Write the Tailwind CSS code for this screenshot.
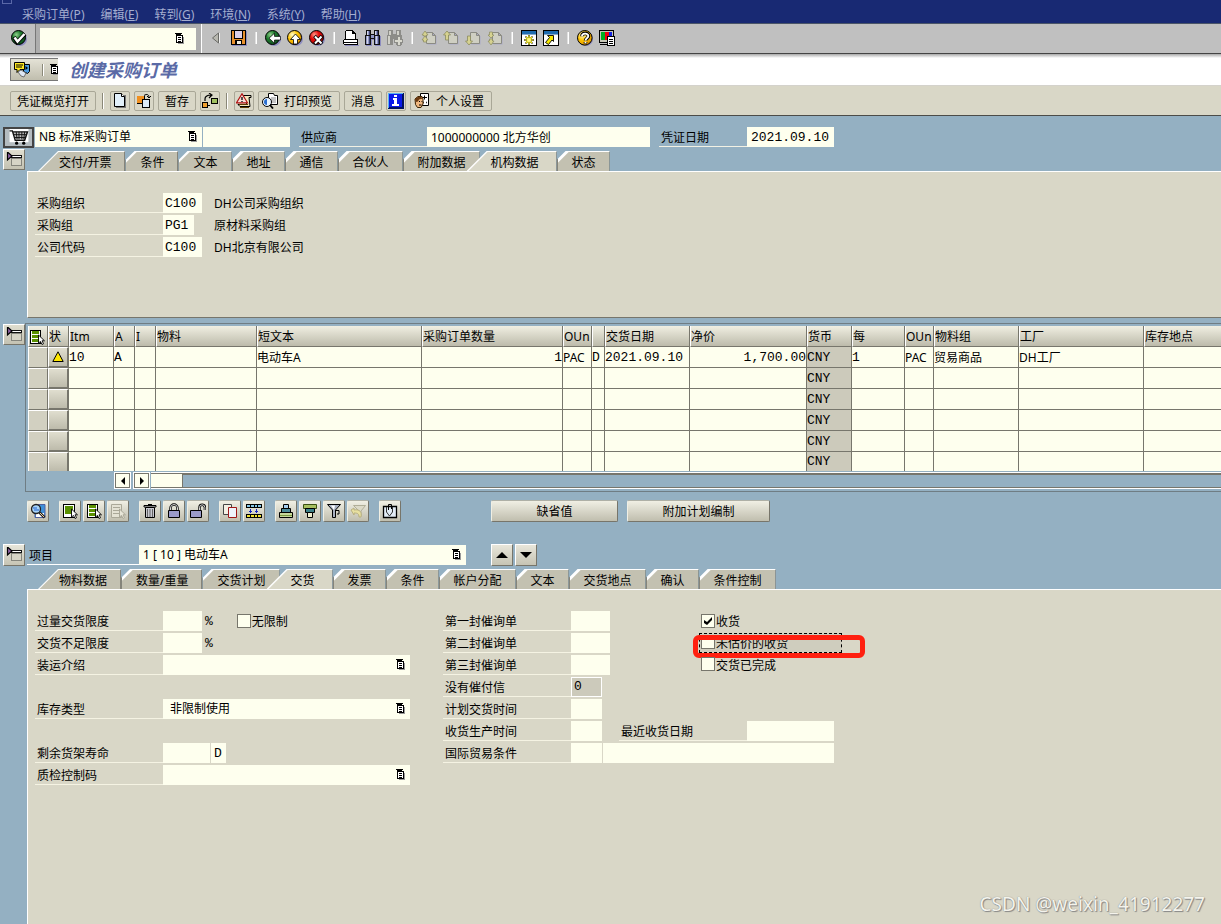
<!DOCTYPE html>
<html lang="zh-CN">
<head>
<meta charset="utf-8">
<meta name="viewport" content="width=device-width, initial-scale=1">
<title>创建采购订单</title>
<script src="https://cdn.jsdelivr.net/npm/@tailwindcss/browser@4"></script>
</head>
<body class="flex min-h-screen flex-col overflow-x-hidden bg-[#94b0c2] font-['Noto_Sans','Noto_Sans_CJK_SC',sans-serif] text-xs leading-5 text-black">

<svg class="absolute h-0 w-0" aria-hidden="true" xmlns="http://www.w3.org/2000/svg">
  <defs>
    <radialGradient id="gGreen" cx=".35" cy=".3" r=".8"><stop offset="0" stop-color="#8fd08a"/><stop offset=".4" stop-color="#1f7a2e"/><stop offset="1" stop-color="#0c4a1c"/></radialGradient>
    <radialGradient id="gRed" cx=".35" cy=".3" r=".8"><stop offset="0" stop-color="#ff9a8a"/><stop offset=".4" stop-color="#e40c0c"/><stop offset="1" stop-color="#a00000"/></radialGradient>
    <radialGradient id="gYel" cx=".35" cy=".3" r=".8"><stop offset="0" stop-color="#fffbd0"/><stop offset=".45" stop-color="#ffc400"/><stop offset="1" stop-color="#d88a00"/></radialGradient>
  </defs>
  <symbol id="ok" viewBox="0 0 16 16"><circle cx="9" cy="9" r="7" fill="#8d8dc0"/><circle cx="7.500" cy="7.500" r="7" fill="url(#gGreen)" stroke="#000"/><path d="M3 7l3 5 8-8" fill="none" stroke="#000" stroke-width="4"/><path d="M3.500 7.500l3 4 7-7.500" fill="none" stroke="#fff" stroke-width="2.500"/></symbol>
  <symbol id="back" viewBox="0 0 16 16"><circle cx="9" cy="9" r="7" fill="#8d8dc0"/><circle cx="7.500" cy="7.500" r="7" fill="url(#gGreen)" stroke="#000"/><path d="M4 8.200l5.500-5v3.200h6v3.600h-6v3.200z" fill="#fff" stroke="#000" stroke-width=".7"/></symbol>
  <symbol id="up" viewBox="0 0 16 16"><circle cx="9" cy="9" r="7" fill="#8d8dc0"/><circle cx="7.500" cy="7.500" r="7" fill="url(#gYel)" stroke="#000"/><path d="M8.500 4l5 5.500h-3v4.500h-4V9.500h-3z" fill="#fff" stroke="#000" stroke-width=".8"/></symbol>
  <symbol id="cancel" viewBox="0 0 16 16"><circle cx="9" cy="9" r="7" fill="#8d8dc0"/><circle cx="7.500" cy="7.500" r="7" fill="url(#gRed)" stroke="#000"/><path d="M5.500 6l7.500 8M13 6l-7.500 8" stroke="#000" stroke-width="3.500"/><path d="M6 6.500l6.500 7M12.500 6.500l-6.500 7" stroke="#fff" stroke-width="2"/></symbol>
  <symbol id="list" viewBox="0 0 10 12"><g shape-rendering="crispEdges"><path d="M3 4h6v7H3z" fill="#999"/><path d="M1 2h7v8H1z" fill="#000"/><path d="M2 3h5v6H2z" fill="#fff"/><path d="M0 0h7v1H0zM1 1h5v1H1zM2 2h3v1H2zM3 4h3v1H3zM3 6h3v1H3zM3 8h3v1H3z" fill="#000"/></g></symbol>
  <symbol id="save" viewBox="0 0 16 16"><g shape-rendering="crispEdges"><path d="M1 1h15v15H1z" fill="#8d8dc0"/><path d="M0 0h15v15H0z" fill="#000"/><path d="M1 1h13v13H1z" fill="#e8902c"/><path d="M3 1h9v8H3z" fill="#000"/><path d="M4 1h7v7H4z" fill="#dcd0e8"/><path d="M4 10h7v4H4z" fill="#000"/><path d="M6 11h4v3H6z" fill="#f4eee0"/></g></symbol>
  <symbol id="print" viewBox="0 0 16 16"><g shape-rendering="crispEdges"><path d="M3 1h7l3 3v6H3z" fill="#fff"/><path d="M3 0h7v1H3zM2 1h1v9H2zM10 1h1v1h1v1h1v7h-1V4H9V1z" fill="#000"/><path d="M1 9h13v5H1z" fill="#fff"/><path d="M1 9h14v1H1zM0 10h1v4H0zM1 12h13v1H1zM1 14h14v1H1zM14 10h1v4h-1z" fill="#000"/><path d="M2 15h14v1H2z" fill="#8d8dc0"/></g></symbol>
  <symbol id="find" viewBox="0 0 16 16"><g shape-rendering="crispEdges"><path d="M2 1h4v4h4V1h4v5h2v10h-6V10H7v6H1V6h1z" fill="#8d8dc0"/><path d="M1 0h5v4h3V0h5v5h1v10H9V9H6v6H0V5h1z" fill="#111"/><path d="M2 1h3v4H2zM10 1h3v4h-3zM1 6h4v8H1zM10 6h4v8h-4zM6 5h3v3H6z" fill="#8f96c4"/><path d="M2 1h1v4H2zM10 1h1v4h-1zM2 6h1v8H2zM11 6h1v8h-1z" fill="#d0d4ec"/><path d="M4 6h1v8H4zM13 6h1v8h-1zM4 1h1v4H4zM12 1h1v4h-1z" fill="#3c4270"/></g></symbol>
  <symbol id="findn" viewBox="0 0 16 16"><g shape-rendering="crispEdges"><path d="M1 0h5v4h3V0h5v5h1v10H9V9H6v6H0V5h1z" fill="#8c8c88"/><path d="M2 1h2v4H2zM10 1h2v4h-2zM1 6h2v8H1z" fill="#d0d0c8"/><path d="M10.500 6.500h3v3h2v3h-2v3h-3v-3h-3v-3h3z" fill="#d8d8ce" stroke="#8c8c88"/></g></symbol>
  <symbol id="pg" viewBox="0 0 16 16"><path d="M5.500 2.500h6l3 3v8h-9z" fill="#a9a9c8" transform="translate(1 1)"/><path d="M5.500 2.500h6l3 3v8h-9zM11.500 2.500v3h3" fill="#cfcfc2" stroke="#8b8b83"/></symbol>
  <symbol id="pgFirst" viewBox="0 0 16 16"><use href="#pg"/><path d="M4 1l3 4H5.500v1h-3V5H1zM4 6l3 4H5.500v2h-3v-2H1z" fill="#d6d290" stroke="#8b8b60" stroke-width=".7"/></symbol>
  <symbol id="pgUp" viewBox="0 0 16 16"><use href="#pg"/><path d="M4 1l3.500 4H5.500v5h-3V5H.5z" fill="#d6d290" stroke="#8b8b60" stroke-width=".8"/></symbol>
  <symbol id="pgDown" viewBox="0 0 16 16"><use href="#pg"/><path d="M4 15l3.500-4H5.500V6h-3v5H.5z" fill="#d6d290" stroke="#8b8b60" stroke-width=".8"/></symbol>
  <symbol id="pgLast" viewBox="0 0 16 16"><use href="#pg"/><path d="M4 8l3-3H5.500V2h-3v3H1zM4 15l3-4H5.500V9h-3v2H1z" fill="#d6d290" stroke="#8b8b60" stroke-width=".7"/></symbol>
  <symbol id="win" viewBox="0 0 16 16"><g shape-rendering="crispEdges"><path d="M0 0h16v16H0z" fill="#000"/><path d="M1 1h14v14H1z" fill="#fff"/><path d="M1 1h14v3H1z" fill="#1f6cb0"/><path d="M1 4h14v1H1z" fill="#8ac"/></g></symbol>
  <symbol id="winNew" viewBox="0 0 16 16"><use href="#win"/><path d="M8 5v10M3 10h10M4.500 6.500l7 7M11.500 6.500l-7 7" stroke="#222" stroke-width="1.500"/><path d="M8 5.500v9M3.500 10h9M5 7l6 6M11 7l-6 6" stroke="#f5e800" stroke-width="1.200"/><circle cx="8" cy="10" r="2" fill="#fff880"/></symbol>
  <symbol id="winLink" viewBox="0 0 16 16"><use href="#win"/><path d="M4.500 5.500h6v6L9 10 5.500 14.500l-3-2L6.500 7.500z" fill="#f5e800" stroke="#000" stroke-width=".9"/></symbol>
  <symbol id="help" viewBox="0 0 16 16"><circle cx="9" cy="9" r="7" fill="#8d8dc0"/><circle cx="7.800" cy="7.800" r="7.300" fill="url(#gYel)" stroke="#000"/><path d="M5 6.200C5 2.500 11.500 2.500 11.500 6c0 2.500-3 2.300-3 4.500M8.500 12v1.500" fill="none" stroke="#000" stroke-width="3.600"/><path d="M5 6.200C5 2.800 11.300 2.800 11.300 6c0 2.300-2.800 2.300-2.800 4.500M8.500 11.800v1.500" fill="none" stroke="#fff" stroke-width="1.900"/></symbol>
  <symbol id="layout" viewBox="0 0 16 16"><g shape-rendering="crispEdges"><path d="M0 0h15v13H0z" fill="#000"/><path d="M1 1h13v11H1z" fill="#c8c8b8"/><path d="M2 2h4v8H2z" fill="#00b020"/><path d="M6 2h4v8H6z" fill="#f00010"/><path d="M10 2h3v8h-3z" fill="#1020e0"/><path d="M1 14h9v1H1z" fill="#000"/><path d="M8.500 6.500h7v9h-7z" fill="#fff" stroke="#000"/><path d="M10 9h4v1h-4zM10 11h4v1h-4zM10 13h4v1h-4z" fill="#000"/></g></symbol>
  <symbol id="svc" viewBox="0 0 16 16"><path d="M9.500 2.500h6v7l-2 2-4-2z" fill="#4a9be0" stroke="#000"/><path d="M11.500 4l2.500 2-2.500 2z" fill="#000"/><path d="M.5.500h10v7H6l-3 3v-3H.5z" fill="#ffe820" stroke="#000"/><path d="M2 3h7M2 5h6" stroke="#000"/><path d="M4 10l3-2 5 3-2 4-3-1z" fill="#dfe8f4" stroke="#555" stroke-width=".8"/></symbol>
  <symbol id="doc" viewBox="0 0 16 16"><path d="M4 2h10v13H4z" fill="#777"/><path d="M2.500.5h7l3 3v10h-10z" fill="#e2f0fa" stroke="#000"/><path d="M9.500.5v3h3" fill="#fff" stroke="#000"/></symbol>
  <symbol id="other" viewBox="0 0 16 16"><g shape-rendering="crispEdges"><path d="M1 3h8v8H1z" fill="#000"/><path d="M1 3h7v7H1z" fill="#f09020"/><path d="M6.500 6.500h7v8h-7z" fill="#dcebf8" stroke="#000"/></g><path d="M8 2.500c3-2 5-1 5 2M11 3l2 2 2-2" fill="none" stroke="#000"/></symbol>
  <symbol id="flow" viewBox="0 0 16 16"><path d="M3 8V6c0-3 3-4 6-4M7 0l3 2-3 3" fill="none" stroke="#000" stroke-width="1.200"/><g shape-rendering="crispEdges"><path d="M.5 9.500h5v5h-5z" fill="#f0a030" stroke="#000"/><path d="M9.500 5.500h6v5h-6z" fill="#9fc060" stroke="#000"/><path d="M6 12h2v1H6z"/></g></symbol>
  <symbol id="warnpaper" viewBox="0 0 16 16"><path d="M7 2.500h8v2h-2l1 9H4l-2-2h9z" fill="#f4e8c0" stroke="#000"/><path d="M3 11.500h9M4 14.500h9" stroke="#5a3a00"/><path d="M6 .8l5.500 9H.5z" fill="#f6dcd6" stroke="#b01010" stroke-width="1.200"/><path d="M6 4v3M6 8v1" stroke="#000" stroke-width="1.300"/></symbol>
  <symbol id="preview" viewBox="0 0 16 16"><path d="M6.500.5h5l1 2h3v9h-9z" fill="#fff" stroke="#000"/><path d="M9 5h5M9 7h5M9 9h5" stroke="#888"/><circle cx="5" cy="9" r="4.500" fill="#e8f4ff" stroke="#000"/><path d="M2 9a3 3 0 0 1 3-3v6a3 3 0 0 1-3-3" fill="#2a6fd0"/><path d="M8 12l3 3.500" stroke="#000" stroke-width="1.800"/></symbol>
  <symbol id="info" viewBox="0 0 16 16"><g shape-rendering="crispEdges"><path d="M0 0h16v16H0z" fill="#001060"/><path d="M0 0h15v1H0zM0 0h1v15H0z" fill="#58b0f0"/><path d="M1 1h13v13H1z" fill="#0818e8"/><path d="M6 2h3v2H6zM5 5h4v6h2v2H4v-2h2V7H5z" fill="#fff"/></g></symbol>
  <symbol id="person" viewBox="0 0 16 16"><path d="M6.500.5h8v12h-8z" fill="#fff" stroke="#000"/><path d="M8 4.500h5M10.500 2.500v4" stroke="#000"/><path d="M9 9.500h1M12 9.500h1" stroke="#333" stroke-width="1.500"/><path d="M1 6l3-2.500h4l1 2.500v5l-2 3.500H3.500l-2-3z" fill="#f0b880" stroke="#3a2000"/><path d="M1 6.500c1-3 6-4 8-1l-4 1-1 2-2 .5z" fill="#6a3a10"/><path d="M5 8.500h1M7.500 8.500h.8M5 12h2.500" stroke="#000"/></symbol>
  <symbol id="cart" viewBox="0 0 20 18"><path d="M0 0h20v14H0z" fill="#fff"/><path d="M0 2h3l3 10h10l3-9H4" fill="#bbb" stroke="#111" stroke-width="1.500"/><path d="M7 3l1 8M10 3v8M13 3v8M16 3l-1 8M4.500 6h13.500M5.500 9H17" stroke="#111"/><circle cx="7.500" cy="15" r="1.700"/><circle cx="15" cy="15" r="1.700"/></symbol>
  <symbol id="fold" viewBox="0 0 16 16"><g shape-rendering="crispEdges"><path d="M5 6h11v8H5z" fill="#85857c"/><path d="M6 7h9v6H6z" fill="#d6d4c6"/><path d="M5 3h11v3H5z" fill="#111"/><path d="M5 4h10v1H5z" fill="#fff"/></g><path d="M1.500 0v8l4.500-4z" fill="#8a5fa0" stroke="#000" stroke-width="1.200"/></symbol>
  <symbol id="rows" viewBox="0 0 16 16"><g shape-rendering="crispEdges"><path d="M1 1h11v14H1z" fill="#000"/><path d="M2 2h9v12H2z" fill="#fff"/><path d="M3 2h7v3H3zM3 6h7v3H3zM3 10h7v3H3z" fill="#5a9000"/></g><path d="M9.500 6v8l2-1.500 1.500 3 1.500-.8-1.500-2.900h2.500z" fill="#fff" stroke="#000" stroke-width=".9"/></symbol>
  <symbol id="block" viewBox="0 0 16 16"><g shape-rendering="crispEdges"><path d="M1 1h12v14H1z" fill="#000"/><path d="M2 2h10v12H2z" fill="#fff"/><path d="M3 3h8v8H3z" fill="#5a9000"/></g><path d="M9.500 6v8l2-1.500 1.500 3 1.500-.8-1.500-2.900h2.500z" fill="#fff" stroke="#000" stroke-width=".9"/></symbol>
  <symbol id="desel" viewBox="0 0 16 16"><path d="M1.500 1.500h10v13h-10z" fill="#e4e2d4" stroke="#aaa898"/><path d="M3 4.500h7M3 7.500h7M3 10.500h7" stroke="#aaa898"/><path d="M9.500 6v8l2-1.500 1.500 3 1.500-.8-1.500-2.900h2.500z" fill="#e8e6d8" stroke="#aaa898"/></symbol>
  <symbol id="zoom" viewBox="0 0 16 16"><path d="M5 1.500h10v13H5z" fill="#4090d8" stroke="#5060a0"/><path d="M6 10h8v4H6z" fill="#fff"/><circle cx="6" cy="6" r="4.500" fill="#a8d4f8" stroke="#222" stroke-width="1.300"/><path d="M3 5h4M4 7h5" stroke="#2060d0"/><path d="M9.500 9.500l5 5" stroke="#222" stroke-width="2.600"/><path d="M10 10l4 4" stroke="#f0d0a0"/></symbol>
  <symbol id="trash" viewBox="0 0 16 16"><path d="M3.500 4.500h9v10h-9z" fill="#c8c8d0" stroke="#000"/><path d="M5.500 6v8M8 6v8M10.500 6v8" stroke="#666"/><path d="M2 2.500h12v1.500H2z" fill="#fff" stroke="#000"/><path d="M6 1.500h4" stroke="#000"/></symbol>
  <symbol id="lock" viewBox="0 0 16 16"><path d="M4.500 8V5a3.500 3.500 0 0 1 7 0v3" fill="none" stroke="#000" stroke-width="2.400"/><path d="M4.500 8V5a3.500 3.500 0 0 1 7 0v3" fill="none" stroke="#eee" stroke-width=".9"/><path d="M2.500 7.500h11v7h-11z" fill="#9a9ac8" stroke="#000"/></symbol>
  <symbol id="unlock" viewBox="0 0 16 16"><path d="M9.500 8V4.500a2.700 2.700 0 0 1 5.400 0V7" fill="none" stroke="#000" stroke-width="2.400"/><path d="M9.500 8V4.500a2.700 2.700 0 0 1 5.400 0V7" fill="none" stroke="#eee" stroke-width=".9"/><path d="M.5 7.500h11v7H.5z" fill="#9a9ac8" stroke="#000"/></symbol>
  <symbol id="copy" viewBox="0 0 16 16"><path d="M1.500 1.500h8v10h-8z" fill="#f4f0e4" stroke="#444"/><path d="M6.500 4.500h8v10h-8z" fill="#eef4fc" stroke="#a01818"/></symbol>
  <symbol id="grid" viewBox="0 0 16 16"><g shape-rendering="crispEdges"><path d="M0 1h16v4H0zM0 11h16v4H0z" fill="#000"/><path d="M1 2h3v2H1zM5 2h3v2H5zM9 2h2v2H9zM12 2h3v2h-3z" fill="#88c8e8"/><path d="M1 12h3v2H1zM5 12h3v2H5zM9 12h2v2H9zM12 12h3v2h-3z" fill="#f0e030"/><path d="M4 6h1v4H4zM3 8h3v1H3zM10 6h1v4h-1zM9 8h3v1H9z" fill="#1020c0"/></g></symbol>
  <symbol id="sortA" viewBox="0 0 16 16"><path d="M5.500 1.500h5v4h-5z" fill="#a8d0f0" stroke="#000"/><path d="M3.500 5.500h9v4h-9z" fill="#4a8a98" stroke="#000"/><path d="M1.500 9.500h13v5h-13z" fill="#c8d89c" stroke="#000"/><path d="M2 12h12v1H2z" fill="#7a9a40"/></symbol>
  <symbol id="sortD" viewBox="0 0 16 16"><path d="M1.500 1.500h13v4h-13z" fill="#a8c060" stroke="#3a5010"/><path d="M3.500 5.500h9v4h-9z" fill="#3a8088" stroke="#000"/><path d="M5.500 9.500h5v5h-5z" fill="#f0f0d0" stroke="#000"/></symbol>
  <symbol id="filter" viewBox="0 0 16 16"><path d="M1.500 1.500h13L9.500 7v7.500h-3V7z" fill="#a8b0c0" stroke="#000"/><path d="M5 2.500h4L8 7" fill="#fff"/><path d="M10 7.500h3v3.500h-2" fill="none" stroke="#000"/></symbol>
  <symbol id="filterX" viewBox="0 0 16 16"><path d="M3.500 2.500h12L11 8v5H9V8z" fill="#dcdac8" stroke="#b0ae98"/><path d="M1 7l3-2v2c6-1 8 2 7 7H9c0-3-1-4-5-4v2z" fill="#e8e0a0" stroke="#b8b080"/></symbol>
  <symbol id="attach" viewBox="0 0 16 16"><path d="M1.500 3.500h13v11h-13z" fill="#e2ecf6" stroke="#000" stroke-width="1.300"/><path d="M4.500 4v5l3 4 3-4V4" fill="none" stroke="#333"/><path d="M6.500 7V1.500h3V6" fill="none" stroke="#000"/></symbol>
</svg>

<nav class="relative flex h-6 items-end gap-4 border-b border-[#4a5568] bg-[#182973] pl-[22px] text-[12px] leading-4 text-[#a4add0]">
  <span class="absolute left-0.5 -top-1.5 h-2.5 w-2.5 border border-[#5a68a8]"></span>
  <a href="#">采购订单(<u>P</u>)</a><a href="#">编辑(<u>E</u>)</a><a href="#">转到(<u>G</u>)</a><a href="#">环境(<u>N</u>)</a><a href="#">系统(<u>Y</u>)</a><a href="#">帮助(<u>H</u>)</a>
</nav>

<div class="flex h-[30px] items-center border-b border-[#444] bg-[#c0c0c0] pb-0.5 [&_button]:block [&_i]:mx-2 [&_i]:h-3 [&_i]:w-0.5 [&_i]:border-r [&_i]:border-white [&_i]:bg-[#e0e0e0] [&_svg]:h-4 [&_svg]:w-4">
  <div class="-mb-0.5 flex h-[29px] w-9 items-center border-r border-[#777] pb-0.5 pl-[11px]"><button aria-label="确认"><svg><use href="#ok"/></svg></button></div>
  <div class="relative -mb-0.5 flex h-[29px] items-center border-r border-white bg-[#adadad] pr-[5px] pl-1">
    <input aria-label="事务代码" class="h-[22px] w-[156px] bg-[#feffee] px-1 outline-none">
    <svg class="absolute right-4 !h-3 !w-2.5"><use href="#list"/></svg>
  </div>
  <button aria-label="隐藏" class="ml-1.5 mr-[7px]"><svg viewBox="0 0 16 16"><path d="M10.500 3v10l-6-5z" fill="#b8b8b0" stroke="#6a6a66"/><path d="M11.500 3v10" stroke="#eee"/></svg></button>
  <button aria-label="保存"><svg><use href="#save"/></svg></button>
  <i></i>
  <div class="flex gap-1.5"><button aria-label="返回"><svg><use href="#back"/></svg></button><button aria-label="退出"><svg><use href="#up"/></svg></button><button aria-label="取消"><svg><use href="#cancel"/></svg></button></div>
  <i></i>
  <div class="flex gap-1.5"><button aria-label="打印"><svg><use href="#print"/></svg></button><button aria-label="查找"><svg><use href="#find"/></svg></button><button aria-label="查找下一个"><svg><use href="#findn"/></svg></button></div>
  <i></i>
  <div class="flex gap-1.5"><button aria-label="首页"><svg><use href="#pgFirst"/></svg></button><button aria-label="上一页"><svg><use href="#pgUp"/></svg></button><button aria-label="下一页"><svg><use href="#pgDown"/></svg></button><button aria-label="末页"><svg><use href="#pgLast"/></svg></button></div>
  <i></i>
  <div class="flex gap-1.5"><button aria-label="新建会话"><svg><use href="#winNew"/></svg></button><button aria-label="快捷方式"><svg><use href="#winLink"/></svg></button></div>
  <i></i>
  <div class="flex gap-1.5"><button aria-label="帮助"><svg><use href="#help"/></svg></button><button aria-label="自定义布局"><svg><use href="#layout"/></svg></button></div>
</div>

<header class="flex h-8 items-center gap-[11px] border-b border-[#d4d2cc] bg-[linear-gradient(#a8a8a8,#fff_4px)] pl-2.5">
  <button aria-label="对象服务" class="flex h-[23px] w-12 items-center overflow-hidden border-t border-l border-[#777] border-b bg-linear-to-b from-[#e4e2d6] to-[#c0beae] pl-[3px]">
    <svg class="h-4 w-4 shrink-0"><use href="#svc"/></svg><i class="ml-3 h-3 w-0.5 shrink-0 border-r border-white bg-[#8a8878]"></i><svg class="ml-1.5 h-3 w-2.5 shrink-0"><use href="#list"/></svg>
  </button>
  <h1 class="text-[18px] font-bold italic leading-6 text-[#5a6aa6]">创建采购订单</h1>
</header>

<div class="flex h-[30px] items-center gap-1 border-b border-[#4c4c48] bg-[#d9d7c7] pl-2.5 leading-[22px] [&_button]:flex [&_button]:h-5 [&_button]:items-center [&_button]:gap-1.5 [&_button]:rounded-xs [&_button]:border [&_button]:border-[#a9a797] [&_button]:whitespace-nowrap [&_svg]:h-4 [&_svg]:w-4">
  <button class="px-1.5 pt-0.5">凭证概览打开</button>
  <i class="mx-0.5 h-4 w-0.5 border-r border-white bg-[#8a8878]"></i>
  <button aria-label="创建" class="px-px"><svg><use href="#doc"/></svg></button>
  <button aria-label="其他采购订单" class="px-px"><svg><use href="#other"/></svg></button>
  <button class="px-1.5 pt-0.5">暂存</button>
  <button aria-label="检查" class="px-px"><svg><use href="#flow"/></svg></button>
  <i class="mx-0.5 h-4 w-0.5 border-r border-white bg-[#8a8878]"></i>
  <button aria-label="警告" class="px-px"><svg><use href="#warnpaper"/></svg></button>
  <button class="pr-[7px] pl-[3px]"><svg><use href="#preview"/></svg><span class="pt-0.5">打印预览</span></button>
  <button class="px-1.5 pt-0.5">消息</button>
  <button aria-label="帮助信息" class="px-px"><svg><use href="#info"/></svg></button>
  <button class="pr-[7px] pl-[3px]"><svg><use href="#person"/></svg><span class="pt-0.5">个人设置</span></button>
</div>

<main class="flex flex-1 flex-col pt-[11px] [&_input]:outline-none [&_label]:whitespace-nowrap">
  <div class="flex h-5 [&>input]:h-5 [&>input]:bg-[#feffee] [&>input]:px-1 [&>input]:pt-0.5 [&>label]:h-5 [&>label]:border-b [&>label]:border-[#f2f1e4] [&>label]:pl-0.5 [&>label]:leading-[22px]">
    <button aria-label="购物车" class="ml-[3px] flex h-[21px] w-[31px] items-center justify-center border-2 border-[#444] bg-[#b4bcc0]"><svg class="h-[17px] w-5"><use href="#cart"/></svg></button>
    <div class="relative ml-px">
      <select aria-label="订单类型" class="h-5 w-[167px] appearance-none bg-[#feffee] px-1 leading-5"><option>NB 标准采购订单</option></select>
      <svg class="pointer-events-none absolute top-1 right-1 h-3 w-2.5"><use href="#list"/></svg>
    </div>
    <input aria-label="订单号" class="ml-px w-[87px]">
    <label for="vendor" class="ml-[9px] w-32">供应商</label><input id="vendor" class="w-[223px]" value="1000000000 北方华创">
    <label for="docdate" class="ml-[9px] w-[88px]">凭证日期</label><input id="docdate" class="w-[87px] font-['Liberation_Mono',monospace] text-[13px]" value="2021.09.10">
  </div>

  <section class="flex">
    <div class="w-[27px] shrink-0 pt-0.5 pl-[3px]"><button aria-label="折叠抬头" class="block h-[21px] w-[22px] border border-[#77756a] border-t-white border-l-white bg-linear-to-b from-[#e0decf] to-[#c4c2b2] px-0.5"><svg class="h-4 w-4"><use href="#fold"/></svg></button></div>
    <div class="min-w-0 flex-1 pt-1">
      <div role="tablist" class="flex h-5 pl-[11px] [&>button]:h-5 [&>button]:border-t [&>button]:border-r [&>button]:border-l [&>button]:border-[#85847a] [&>button]:border-t-white [&>button]:bg-[linear-gradient(135deg,#fff_7px,#c3c1b1_8px)] [&>button]:pt-px [&>button]:pr-[13px] [&>button]:pl-3.5 [&>button]:whitespace-nowrap [&>button]:[clip-path:polygon(9px_0,100%_0,100%_100%,0_100%,0_9px)]">
        <button role="tab" class="!border-l-0 !bg-[linear-gradient(135deg,#fff_14px,#c3c1b1_15px)] !pl-[21px] ![clip-path:polygon(20px_0,100%_0,100%_100%,0_100%)]">交付/开票</button>
        <button role="tab">条件</button>
        <button role="tab">文本</button>
        <button role="tab">地址</button>
        <button role="tab">通信</button>
        <button role="tab">合伙人</button>
        <button role="tab">附加数据</button>
        <button role="tab" aria-selected="true" class="z-10 -ml-[13px] !border-l-0 !bg-[linear-gradient(135deg,#fff_14px,#d9d7c7_15px)] !pr-[17px] !pl-6 ![clip-path:polygon(20px_0,100%_0,100%_100%,0_100%)]">机构数据</button>
        <button role="tab">状态</button>
      </div>
      <div class="flex h-[147px] flex-col gap-0.5 border-t border-b border-l border-t-white border-b-[#77766c] border-l-white bg-[#d9d7c7] pt-[21px] pl-[7px] leading-[22px] [&_input]:h-5 [&_input]:bg-[#feffee] [&_input]:px-0.5 [&_input]:pt-0.5 [&_input]:font-['Liberation_Mono',monospace] [&_input]:text-[13px] [&_label]:h-5 [&_label]:w-32 [&_label]:border-b [&_label]:border-[#f5f3e3] [&_label]:pl-0.5 [&>div]:flex [&>div]:h-5">
        <div><label for="org">采购组织</label><input id="org" class="w-[39px]" value="C100"><span class="ml-3">DH公司采购组织</span></div>
        <div><label for="grp">采购组</label><input id="grp" class="mr-2 w-[31px]" value="PG1"><span class="ml-3">原材料采购组</span></div>
        <div><label for="co">公司代码</label><input id="co" class="w-[39px]" value="C100"><span class="ml-3">DH北京有限公司</span></div>
      </div>
    </div>
  </section>

  <section class="mt-[5px] flex">
    <div class="w-[25px] shrink-0 pt-px pl-[3px]"><button aria-label="折叠项目" class="block h-[21px] w-[22px] border border-[#77756a] border-t-white border-l-white bg-linear-to-b from-[#e0decf] to-[#c4c2b2] px-0.5"><svg class="h-4 w-4"><use href="#fold"/></svg></button></div>
    <div class="min-w-0 flex-1 border-t border-b border-l border-[#6f7d84] pt-0.5 pl-0.5">
      <table class="w-full table-fixed border-separate border-spacing-0 leading-[18px] [&_td]:h-[21px] [&_td]:overflow-hidden [&_td]:border-r [&_td]:border-b [&_td]:border-[#77766c] [&_td]:bg-[#feffee] [&_td]:px-0 [&_td]:pt-0.5 [&_td]:pb-0 [&_td]:whitespace-nowrap [&_th]:h-[21px] [&_th]:overflow-hidden [&_th]:border-r [&_th]:border-b [&_th]:border-l [&_th]:border-[#77766c] [&_th]:border-l-white [&_th]:bg-linear-to-b [&_th]:from-[#f0efe2] [&_th]:to-[#bdbbab] [&_th]:px-0 [&_th]:pt-0.5 [&_th]:pb-0 [&_th]:text-left [&_th]:font-normal [&_th]:whitespace-nowrap">
        <colgroup><col class="w-5"><col class="w-[21px]"><col class="w-[45px]"><col class="w-[21px]"><col class="w-[21px]"><col class="w-[101px]"><col class="w-[165px]"><col class="w-[141px]"><col class="w-[29px]"><col class="w-[13px]"><col class="w-[85px]"><col class="w-[117px]"><col class="w-[45px]"><col class="w-[53px]"><col class="w-[29px]"><col class="w-[85px]"><col class="w-[125px]"><col></colgroup>
        <thead><tr><th aria-label="选择全部"><svg class="h-4 w-4"><use href="#rows"/></svg></th><th>状</th><th>Itm</th><th>A</th><th>I</th><th>物料</th><th>短文本</th><th>采购订单数量</th><th>OUn</th><th></th><th>交货日期</th><th>净价</th><th>货币</th><th>每</th><th>OUn</th><th>物料组</th><th>工厂</th><th class="!border-r-0">库存地点</th></tr></thead>
        <tbody class="[&_td:last-child]:border-r-0 [&_td:nth-child(-n+2)]:border-t [&_td:nth-child(-n+2)]:border-l [&_td:nth-child(-n+2)]:border-t-white [&_td:nth-child(-n+2)]:border-l-white [&_td:nth-child(-n+2)]:pt-0 [&_td:nth-child(1)]:bg-[#d2d0c1] [&_td:nth-child(2)]:border-r-2 [&_td:nth-child(2)]:border-b-2 [&_td:nth-child(2)]:bg-[#cfcdbe] [&_td:nth-child(2)]:bg-linear-to-b [&_td:nth-child(2)]:from-[#e0decf] [&_td:nth-child(2)]:to-[#bdbbab] [&_td:nth-child(13)]:bg-[#cccabb] [&_td:nth-child(13)]:font-['Liberation_Mono',monospace] [&_td:nth-child(13)]:text-[13px]">
          <tr><td></td><td><svg class="mx-auto h-3 w-3" viewBox="0 0 12 12"><path d="M6 .8l5.200 9.700H.8z" fill="#ffe800" stroke="#000"/></svg></td><td class="font-['Liberation_Mono',monospace] text-[13px]">10</td><td class="font-['Liberation_Mono',monospace] text-[13px]">A</td><td></td><td></td><td>电动车A</td><td class="text-right font-['Liberation_Mono',monospace] text-[13px]">1</td><td>PAC</td><td class="font-['Liberation_Mono',monospace] text-[13px]">D</td><td class="font-['Liberation_Mono',monospace] text-[13px]">2021.09.10</td><td class="text-right font-['Liberation_Mono',monospace] text-[13px]">1,700.00</td><td>CNY</td><td class="font-['Liberation_Mono',monospace] text-[13px]">1</td><td>PAC</td><td>贸易商品</td><td>DH工厂</td><td></td></tr>
          <tr><td></td><td></td><td></td><td></td><td></td><td></td><td></td><td></td><td></td><td></td><td></td><td></td><td>CNY</td><td></td><td></td><td></td><td></td><td></td></tr>
          <tr><td></td><td></td><td></td><td></td><td></td><td></td><td></td><td></td><td></td><td></td><td></td><td></td><td>CNY</td><td></td><td></td><td></td><td></td><td></td></tr>
          <tr><td></td><td></td><td></td><td></td><td></td><td></td><td></td><td></td><td></td><td></td><td></td><td></td><td>CNY</td><td></td><td></td><td></td><td></td><td></td></tr>
          <tr><td></td><td></td><td></td><td></td><td></td><td></td><td></td><td></td><td></td><td></td><td></td><td></td><td>CNY</td><td></td><td></td><td></td><td></td><td></td></tr>
          <tr class="[&_td]:!h-[19px] [&_td]:!border-b-0 [&_td]:!pt-0 [&_td]:leading-[19px]"><td></td><td></td><td></td><td></td><td></td><td></td><td></td><td></td><td></td><td></td><td></td><td></td><td>CNY</td><td></td><td></td><td></td><td></td><td></td></tr>
        </tbody>
      </table>
      <div class="mt-px mb-0.5 ml-[86px] flex h-[17px] gap-0.5 [&>button]:flex [&>button]:w-[17px] [&>button]:items-center [&>button]:justify-center [&>button]:border-2 [&>button]:border-white [&>button]:bg-[#feffee] [&>button]:outline-1 [&>button]:-outline-offset-2 [&>button]:outline-[#77766c]">
        <button aria-label="向左滚动"><svg class="h-2 w-1" viewBox="0 0 4 8"><path d="M4 0v8L0 4z"/></svg></button>
        <button aria-label="向右滚动"><svg class="h-2 w-1" viewBox="0 0 4 8"><path d="M0 0v8l4-4z"/></svg></button>
        <div class="-ml-px flex-1 border-t border-b border-white"><div class="h-full border-t-2 border-b border-[#77766c]"><div class="-mt-px h-3.5 w-8 border-r border-b border-[#77766c] bg-[#feffee]"></div></div></div>
      </div>
    </div>
  </section>

  <div class="mt-2 flex flex-wrap gap-2.5 pl-[27px] [&_button]:flex [&_button]:h-[22px] [&_button]:items-center [&_button]:justify-center [&_button]:rounded-xs [&_button]:border [&_button]:border-[#77756a] [&_button]:border-t-[#aeb0a6] [&_button]:border-l-[#f0efe4] [&_button]:bg-linear-to-b [&_button]:from-[#f0efe4] [&_button]:to-[#c0beae] [&_svg]:h-4 [&_svg]:w-4 [&>div]:flex [&>div]:gap-0.5 [&>div>button]:w-[22px]">
    <div><button aria-label="明细"><svg><use href="#zoom"/></svg></button></div>
    <div><button aria-label="全选"><svg><use href="#block"/></svg></button><button aria-label="选择块"><svg><use href="#rows"/></svg></button><button aria-label="取消选择"><svg><use href="#desel"/></svg></button></div>
    <div><button aria-label="删除"><svg><use href="#trash"/></svg></button><button aria-label="锁定"><svg><use href="#lock"/></svg></button><button aria-label="解锁"><svg><use href="#unlock"/></svg></button></div>
    <div><button aria-label="复制"><svg><use href="#copy"/></svg></button><button aria-label="合计"><svg><use href="#grid"/></svg></button></div>
    <div><button aria-label="升序"><svg><use href="#sortA"/></svg></button><button aria-label="降序"><svg><use href="#sortD"/></svg></button><button aria-label="过滤"><svg><use href="#filter"/></svg></button><button aria-label="取消过滤"><svg><use href="#filterX"/></svg></button></div>
    <div><button aria-label="附加"><svg><use href="#attach"/></svg></button></div>
    <button class="ml-20 w-[127px] pt-0.5">缺省值</button>
    <button class="-ml-px w-[143px] pt-0.5">附加计划编制</button>
  </div>

  <div class="mt-[22px] flex h-[22px] items-start pl-[3px] [&>button]:flex [&>button]:h-[22px] [&>button]:w-[22px] [&>button]:items-center [&>button]:justify-center [&>button]:border [&>button]:border-[#77756a] [&>button]:border-t-white [&>button]:border-l-white [&>button]:bg-linear-to-b [&>button]:from-[#e8e6da] [&>button]:to-[#c6c4b4]">
    <button aria-label="折叠项目明细"><svg class="h-4 w-4"><use href="#fold"/></svg></button>
    <label for="item" class="mt-px ml-0.5 h-5 w-28 border-b border-white pl-0.5 leading-[22px]">项目</label>
    <div class="relative mt-px"><select id="item" class="h-5 w-[327px] appearance-none bg-[#feffee] px-1 leading-5"><option>1 [ 10 ] 电动车A</option></select><svg class="pointer-events-none absolute top-1 right-1 h-3 w-2.5"><use href="#list"/></svg></div>
    <button aria-label="上一项" class="ml-[25px]"><svg class="h-1.5 w-3" viewBox="0 0 12 6"><path d="M6 0l6 6H0z"/></svg></button>
    <button aria-label="下一项" class="ml-0.5"><svg class="h-1.5 w-3" viewBox="0 0 12 6"><path d="M0 0h12L6 6z"/></svg></button>
  </div>

  <section class="ml-[27px] flex flex-1 flex-col pt-[3px]">
    <div role="tablist" class="flex h-5 pl-[11px] [&>button]:h-5 [&>button]:border-t [&>button]:border-r [&>button]:border-l [&>button]:border-[#85847a] [&>button]:border-t-white [&>button]:bg-[linear-gradient(135deg,#fff_7px,#c3c1b1_8px)] [&>button]:pt-px [&>button]:pr-[13px] [&>button]:pl-3.5 [&>button]:whitespace-nowrap [&>button]:[clip-path:polygon(9px_0,100%_0,100%_100%,0_100%,0_9px)]">
      <button role="tab" class="!border-l-0 !bg-[linear-gradient(135deg,#fff_14px,#c3c1b1_15px)] !pl-[21px] ![clip-path:polygon(20px_0,100%_0,100%_100%,0_100%)]">物料数据</button>
      <button role="tab">数量/重量</button>
      <button role="tab">交货计划</button>
      <button role="tab" aria-selected="true" class="z-10 -ml-[13px] !border-l-0 !bg-[linear-gradient(135deg,#fff_14px,#d9d7c7_15px)] !pr-[17px] !pl-6 ![clip-path:polygon(20px_0,100%_0,100%_100%,0_100%)]">交货</button>
      <button role="tab">发票</button>
      <button role="tab">条件</button>
      <button role="tab">帐户分配</button>
      <button role="tab">文本</button>
      <button role="tab">交货地点</button>
      <button role="tab">确认</button>
      <button role="tab">条件控制</button>
    </div>

    <div class="relative flex flex-1 items-start gap-[33px] border-t border-l border-white bg-[#d9d7c7] pt-[21px] pb-10 pl-[7px] leading-[22px] [&_input[type=checkbox]]:h-3.5 [&_input[type=checkbox]]:w-3.5 [&_input[type=checkbox]]:shrink-0 [&_input[type=checkbox]]:appearance-none [&_input[type=checkbox]]:border [&_input[type=checkbox]]:border-[#77766c] [&_input[type=checkbox]]:bg-[#feffee] [&_input[type=checkbox]]:outline-1 [&_input[type=checkbox]]:outline-white [&_input[type=text]]:h-5 [&_input[type=text]]:bg-[#feffee] [&_input[type=text]]:px-1 [&_input[type=text]]:pt-0.5 [&_input[type=text]]:font-['Liberation_Mono',monospace] [&_input[type=text]]:text-[13px] [&_.lb]:w-32 [&_.lb]:shrink-0 [&_.lb]:border-b [&_.lb]:border-[#f5f3e3] [&_.lb]:pl-0.5 [&_label]:h-5 [&_select]:h-5 [&_select]:w-[247px] [&_select]:appearance-none [&_select]:bg-[#feffee] [&_select]:px-[7px] [&_select]:leading-5">
      <div class="flex w-[375px] shrink-0 flex-col gap-0.5 [&>div]:relative [&>div]:flex [&>div]:h-5">
        <div><label class="lb" for="over">过量交货限度</label><input type="text" id="over" class="w-[39px]"><span class="ml-[3px] font-['Liberation_Mono',monospace] text-[13px]">%</span><input type="checkbox" id="unl" class="mt-[3px] ml-6"><label for="unl" class="ml-px">无限制</label></div>
        <div><label class="lb" for="under">交货不足限度</label><input type="text" id="under" class="w-[39px]"><span class="ml-[3px] font-['Liberation_Mono',monospace] text-[13px]">%</span></div>
        <div><label class="lb" for="ship">装运介绍</label><select id="ship"><option></option></select><svg class="pointer-events-none absolute top-1 right-1 h-3 w-2.5"><use href="#list"/></svg></div>
        <div></div>
        <div><label class="lb" for="stock">库存类型</label><select id="stock"><option>非限制使用</option></select><svg class="pointer-events-none absolute top-1 right-1 h-3 w-2.5"><use href="#list"/></svg></div>
        <div></div>
        <div><label class="lb" for="shelf">剩余货架寿命</label><input type="text" id="shelf" class="w-[47px]"><input type="text" aria-label="期间标识" class="ml-px w-[15px] !px-[3px]" value="D"></div>
        <div><label class="lb" for="qm">质检控制码</label><select id="qm"><option></option></select><svg class="pointer-events-none absolute top-1 right-1 h-3 w-2.5"><use href="#list"/></svg></div>
      </div>
      <div class="flex shrink-0 flex-col gap-0.5 [&>div]:relative [&>div]:flex [&>div]:h-5">
        <div><label class="lb" for="r1">第一封催询单</label><input type="text" id="r1" class="w-[39px]">
          <span class="relative ml-[91px] flex"><input type="checkbox" id="gr" class="mt-[3px]" checked><svg class="pointer-events-none absolute top-1.5 left-[3px] h-2 w-2" viewBox="0 0 8 8"><path d="M0 3l3 2 5-5v3L3 8 0 6z"/></svg><label for="gr" class="ml-px">收货</label></span></div>
        <div><label class="lb" for="r2">第二封催询单</label><input type="text" id="r2" class="w-[39px]">
          <span class="ml-[89px] flex w-[143px] bg-[#cfcdbe] pl-0.5 outline-1 -outline-offset-1 outline-dashed outline-black"><input type="checkbox" id="nv" class="mt-0.5"><label for="nv" class="ml-px">未估价的收货</label></span>
          <span class="pointer-events-none absolute top-0.5 left-[250px] h-[23px] w-[172px] rounded-md border-[5px] border-[#ff2010]"></span></div>
        <div><label class="lb" for="r3">第三封催询单</label><input type="text" id="r3" class="w-[39px]"><input type="checkbox" id="dc" class="mt-0.5 ml-[91px]"><label for="dc" class="ml-px">交货已完成</label></div>
        <div><label class="lb" for="nr">没有催付信</label><input type="text" id="nr" class="w-[31px] border border-white !bg-[#cccabb] !px-0.5 !pt-0" value="0" readonly></div>
        <div><label class="lb" for="pd">计划交货时间</label><input type="text" id="pd" class="w-[31px]"></div>
        <div><label class="lb" for="gp">收货生产时间</label><input type="text" id="gp" class="w-[31px]"><label class="lb ml-[17px]" for="lg">最近收货日期</label><input type="text" id="lg" class="w-[87px]"></div>
        <div><label class="lb" for="inc">国际贸易条件</label><input type="text" id="inc" class="w-[31px]"><input type="text" aria-label="国际贸易条件地点" class="ml-px w-[231px]"></div>
      </div>
      <p class="absolute right-4 bottom-1.5 text-[19px] leading-7 text-[#f4f3ec] [text-shadow:0_0_1px_#777,1px_1px_1px_#888]">CSDN @weixin_41912277</p>
    </div>
  </section>
</main>
</body>
</html>
